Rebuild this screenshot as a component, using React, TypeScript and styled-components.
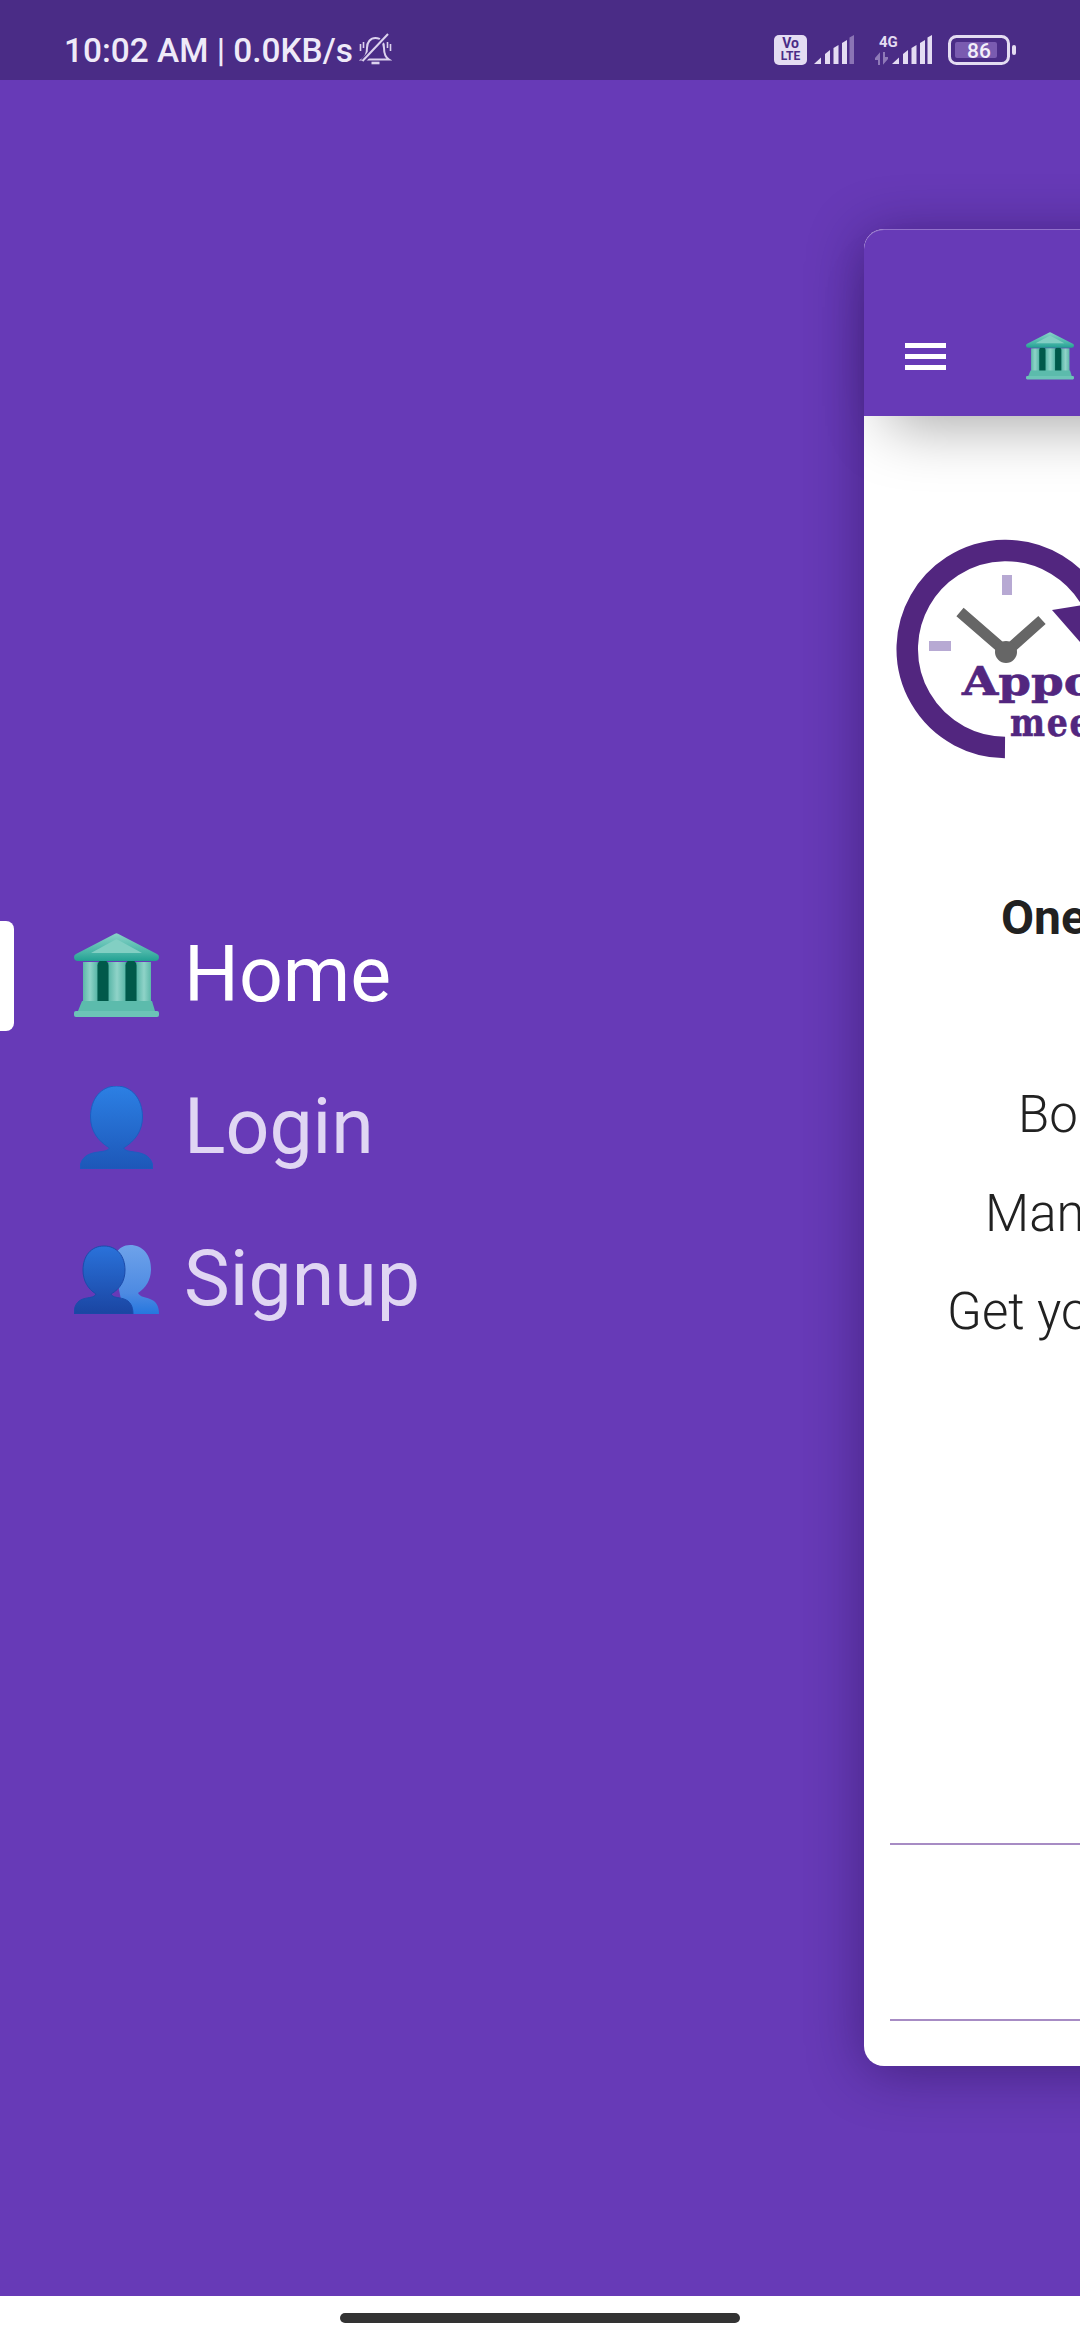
import React from 'react'
import styled, { createGlobalStyle } from 'styled-components'

const GlobalStyle = createGlobalStyle`
  html, body {
    margin: 0;
    padding: 0;
    background: #673ab7;
  }
  body {
    font-family: Roboto, "Liberation Sans", sans-serif;
  }
`

const Page = styled.div`
  position: relative;
  width: 1080px;
  height: 2340px;
  overflow: hidden;
  display: flex;
  flex-direction: column;
  background: #673ab7;
`

const StatusBar = styled.div`
  height: 80px;
  flex: none;
  box-sizing: border-box;
  padding: 19px 64px 0;
  background: #4a2c86;
  display: flex;
  align-items: center;
  justify-content: space-between;
`

const StatusLeft = styled.div`
  display: flex;
  align-items: center;
  gap: 6px;
`

const StatusText = styled.span`
  font-size: 33.4px;
  font-weight: 500;
  line-height: 33px;
  padding-top: 2px;
  color: #efeaf8;
  white-space: nowrap;
`

const StatusRight = styled.div`
  display: flex;
  align-items: center;
`

const VolteBadge = styled.div`
  width: 33px;
  height: 30px;
  margin-right: 7px;
  border-radius: 5px;
  background: #e4dcf2;
  color: #4a2c86;
  font-weight: 700;
  line-height: 13px;
  display: flex;
  flex-direction: column;
  align-items: center;
  justify-content: center;
`

const VolteLine = styled.span<{ $size: number }>`
  font-size: ${(p) => p.$size}px;
`

const NetworkStack = styled.div`
  width: 17px;
  height: 30px;
  margin-left: 21px;
  position: relative;
`

const FourG = styled.span`
  position: absolute;
  left: 4px;
  top: -2px;
  font-size: 15px;
  font-weight: 700;
  color: #e4dcf2;
`

const TransferArrows = styled.svg`
  position: absolute;
  left: 0;
  bottom: 0;
`

const BatteryWrap = styled.span`
  display: flex;
  margin-left: 16px;
`

const Main = styled.div`
  flex: 1;
  box-sizing: border-box;
  padding-top: 819px;
`

const Menu = styled.nav`
  display: flex;
  flex-direction: column;
`

const MenuRow = styled.div<{ $active?: boolean }>`
  position: relative;
  height: 152px;
  display: flex;
  align-items: center;
  color: ${(p) => (p.$active ? '#ffffff' : '#e0d6f3')};
`

const Indicator = styled.span`
  position: absolute;
  left: 0;
  top: 22px;
  width: 14px;
  height: 110px;
  background: #fff;
  border-radius: 0 8px 8px 0;
`

const IconSlot = styled.span`
  width: 85px;
  margin-left: 74px;
  display: flex;
  justify-content: center;
`

const MenuLabel = styled.span`
  margin-left: 25px;
  font-size: 77px;
  font-weight: 400;
  line-height: 90px;
`

const Card = styled.div`
  position: absolute;
  left: 864px;
  top: 229px;
  width: 900px;
  height: 1837px;
  border-radius: 20px;
  background: #fff;
  box-shadow: 0 6px 55px rgba(20, 5, 50, 0.42);
  display: flex;
  flex-direction: column;
`

const CardHeader = styled.header`
  height: 187px;
  flex: none;
  box-sizing: border-box;
  padding: 103px 0 0 41px;
  border-radius: 20px 20px 0 0;
  background: #673ab7;
  box-shadow: inset 0 1px 0 rgba(255, 255, 255, 0.28), 0 34px 60px -24px rgba(0, 0, 0, 0.34);
  display: flex;
  align-items: flex-start;
  gap: 80px;
`

const Hamburger = styled.div`
  width: 41px;
  margin-top: 11px;
  display: flex;
  flex-direction: column;
  gap: 6px;
`

const HamburgerBar = styled.span`
  display: block;
  height: 5px;
  background: #fff;
`

const CardBody = styled.div`
  flex: 1;
  padding: 114px 0 0 26px;
  display: flex;
  flex-direction: column;
`

const Logo = styled.svg`
  display: block;
  flex: none;
  overflow: visible;
`

const Headline = styled.div<{ $indent: number }>`
  margin: 128px 0 0 ${(p) => p.$indent}px;
  font-size: 48px;
  font-weight: 700;
  line-height: 60px;
  color: #212121;
  white-space: nowrap;
`

const Lines = styled.div`
  margin-top: 118px;
  display: flex;
  flex-direction: column;
`

const Line = styled.div<{ $indent: number }>`
  margin-left: ${(p) => p.$indent}px;
  font-size: 51px;
  font-weight: 300;
  line-height: 98.5px;
  color: #212121;
  white-space: nowrap;
`

const Divider = styled.hr<{ $top: number }>`
  margin: ${(p) => p.$top}px 0 0;
  border: 0;
  height: 2px;
  background: #a78cc4;
`

const NavBar = styled.div`
  height: 44px;
  flex: none;
  background: #fff;
  display: flex;
  align-items: flex-start;
  justify-content: center;
  padding-top: 17px;
  box-sizing: border-box;
`

const NavHandle = styled.span`
  width: 400px;
  height: 10px;
  border-radius: 5px;
  background: #333;
`

const Signal = ({ dimLast }: { dimLast?: boolean }) => (
  <svg width="40" height="30" viewBox="0 0 40 30">
    <path d="M0 29 L7 22.5 V29 Z" fill="#e4dcf2" />
    <path d="M11 29 V19 L16 15 V29 Z" fill="#e4dcf2" />
    <path d="M19.5 29 V13 L24.5 10 V29 Z" fill="#e4dcf2" />
    <path d="M28 29 V8 L33 5 V29 Z" fill="#e4dcf2" />
    <path d="M35.5 29 V2.5 L40 0 V29 Z" fill={dimLast ? '#8b74b5' : '#e4dcf2'} />
  </svg>
)

const MutedBell = () => (
  <svg width="33" height="33" viewBox="0 0 33 33" fill="none" stroke="#dcd2ee" strokeWidth="2">
    <path d="M3 26.5 C7 24 8 21 8 15 C8 9 11.5 5 16.5 5 C21.5 5 25 9 25 15 C25 21 26 24 30 26.5 Z" />
    <path d="M12.5 30 H20.5" strokeWidth="2.6" />
    <path d="M1.5 11 V18 M4.5 9 V15 M28.5 9 V15 M31.5 11 V18" strokeWidth="1.6" />
    <path d="M4 28 L29 1" stroke="#4a2c86" strokeWidth="5" />
    <path d="M3.5 28 L29 1" />
  </svg>
)

const Battery = () => (
  <svg width="68" height="30" viewBox="0 0 68 30">
    <rect x="1.5" y="1.5" width="59" height="27" rx="7" fill="none" stroke="#e4dcf2" strokeWidth="3" />
    <rect x="7" y="7" width="42" height="16" rx="2" fill="#7a5bb0" />
    <rect x="64" y="10" width="4" height="10" rx="2" fill="#e4dcf2" />
    <text x="31" y="23" textAnchor="middle" fontSize="21" fontWeight="500" fill="#f3eff9" fontFamily="Roboto, sans-serif">
      86
    </text>
  </svg>
)

const BankIcon = ({ id, size }: { id: string; size: number }) => (
  <svg width={size} height={size} viewBox="0 0 85 85">
    <defs>
      <linearGradient id={`${id}-roof`} x1="0" y1="0" x2="0" y2="1">
        <stop offset="0" stopColor="#8ad3c8" />
        <stop offset="0.7" stopColor="#46b4a6" />
        <stop offset="1" stopColor="#22a092" />
      </linearGradient>
      <linearGradient id={`${id}-col`} x1="0" y1="0" x2="1" y2="0">
        <stop offset="0" stopColor="#5cb8a9" />
        <stop offset="0.5" stopColor="#8fd3c8" />
        <stop offset="1" stopColor="#5cb8a9" />
      </linearGradient>
    </defs>
    <rect x="22" y="29" width="42" height="42" fill="#4cae9f" />
    <rect x="9" y="29" width="14" height="40" fill={`url(#${id}-col)`} />
    <rect x="35" y="29" width="16" height="40" fill={`url(#${id}-col)`} />
    <rect x="63" y="29" width="14" height="40" fill={`url(#${id}-col)`} />
    <rect x="23.5" y="27" width="11" height="47" rx="5.5" fill="#00594a" />
    <rect x="51.5" y="27" width="11" height="47" rx="5.5" fill="#00594a" />
    <path d="M41 0.7 Q42.5 0 44 0.7 L83 21 Q85 22 85 24 Q85 28 81 28 H4 Q0 28 0 24 Q0 22 2 21 Z" fill={`url(#${id}-roof)`} />
    <path d="M42.5 6 L68 20 H17 Z" fill="#82cfc3" />
    <path d="M8 68 H78 L81 78 H4 Z" fill="#5cbbac" />
    <rect x="0" y="78" width="85" height="6" rx="2" fill="#6cc4b7" />
  </svg>
)

const PersonIcon = () => (
  <svg width="73" height="83" viewBox="0 0 73 83">
    <defs>
      <linearGradient id="person-fill" x1="0" y1="0" x2="0" y2="1">
        <stop offset="0" stopColor="#2c80e4" />
        <stop offset="1" stopColor="#1d57b8" />
      </linearGradient>
    </defs>
    <path
      d="M36.5 0 C52 0 62.5 13 62.5 31 C62.5 45 55 55 43.5 62 C46 66 52 65 60 67 C68 69 73 74 73 83 H0 C0 74 5 69 13 67 C21 65 27 66 29.5 62 C18 55 10.5 45 10.5 31 C10.5 13 21 0 36.5 0 Z"
      fill="url(#person-fill)"
      stroke="#1e5cc0"
      strokeWidth="1"
    />
  </svg>
)

const GroupIcon = () => (
  <svg width="85" height="69" viewBox="0 0 85 69">
    <defs>
      <linearGradient id="group-front" x1="0" y1="0" x2="0" y2="1">
        <stop offset="0" stopColor="#2a72da" />
        <stop offset="1" stopColor="#1a45a2" />
      </linearGradient>
      <linearGradient id="group-back" x1="0" y1="0" x2="0" y2="1">
        <stop offset="0" stopColor="#6ea2ea" />
        <stop offset="0.7" stopColor="#4d8ae2" />
        <stop offset="1" stopColor="#2577de" />
      </linearGradient>
    </defs>
    <path
      d="M56 0 C69 0 77 10 77 24 C77 35 72 43 64 48 C66 52 71 52 76 54 C82 56 85 61 85 69 H50 L44 40 L42 8 C45 3 50 0 56 0 Z"
      fill="url(#group-back)"
    />
    <path
      d="M30 1 C43 1 51 11 51 25 C51 36 46 44 37 49 C39 53 44 52 50 54 C56 56 59 61 59 69 H0 C0 61 3 56 9 54 C15 52 20 53 22 49 C14 44 9 36 9 25 C9 11 17 1 30 1 Z"
      fill="url(#group-front)"
      stroke="#1c4bab"
      strokeWidth="1"
    />
  </svg>
)

const ClockLogo = () => (
  <Logo width="300" height="230" viewBox="0 0 300 230">
    <path
      d="M115 217.5 A 98.5 98.5 0 1 1 200 68"
      fill="none"
      stroke="#52267f"
      strokeWidth="21.5"
    />
    <path d="M162 80 L225 70 L210 135 Z" fill="#52267f" />
    <rect x="112" y="45" width="10" height="20" fill="#b7a9d3" />
    <rect x="39" y="111" width="22" height="10" fill="#b7a9d3" />
    <path d="M70 82 L116 122 L152 90" fill="none" stroke="#666" strokeWidth="11" />
    <circle cx="116" cy="122" r="11" fill="#666" />
    <text
      transform="translate(72 165) scale(1.2 1)"
      fontFamily='"DejaVu Serif", serif'
      fontWeight="700"
      fontSize="39"
      fill="#52267f"
      stroke="#52267f"
      strokeWidth="0.6"
    >
      Appointment
    </text>
    <text
      transform="translate(120 206) scale(0.85 1)"
      fontFamily='"DejaVu Serif", serif'
      fontWeight="700"
      fontSize="39"
      letterSpacing="2"
      fill="#52267f"
      stroke="#52267f"
      strokeWidth="0.6"
    >
      meeting
    </text>
  </Logo>
)

export default function App() {
  return (
    <Page>
      <GlobalStyle />
      <StatusBar>
        <StatusLeft>
          <StatusText>10:02 AM | 0.0KB/s</StatusText>
          <MutedBell />
        </StatusLeft>
        <StatusRight>
          <VolteBadge>
            <VolteLine $size={14}>Vo</VolteLine>
            <VolteLine $size={12}>LTE</VolteLine>
          </VolteBadge>
          <Signal dimLast />
          <NetworkStack>
            <FourG>4G</FourG>
            <TransferArrows width="13" height="13" viewBox="0 0 13 13">
              <path d="M4 13 V3 L0.5 7 H3 M9 0 V10 L12.5 6 H10" fill="none" stroke="#8f7ab8" strokeWidth="2" />
            </TransferArrows>
          </NetworkStack>
          <Signal />
          <BatteryWrap>
            <Battery />
          </BatteryWrap>
        </StatusRight>
      </StatusBar>

      <Main>
        <Menu>
          <MenuRow $active>
            <Indicator />
            <IconSlot>
              <BankIcon id="menu-bank" size={85} />
            </IconSlot>
            <MenuLabel>Home</MenuLabel>
          </MenuRow>
          <MenuRow>
            <IconSlot>
              <PersonIcon />
            </IconSlot>
            <MenuLabel>Login</MenuLabel>
          </MenuRow>
          <MenuRow>
            <IconSlot>
              <GroupIcon />
            </IconSlot>
            <MenuLabel>Signup</MenuLabel>
          </MenuRow>
        </Menu>
      </Main>

      <NavBar>
        <NavHandle />
      </NavBar>

      <Card>
        <CardHeader>
          <Hamburger>
            <HamburgerBar />
            <HamburgerBar />
            <HamburgerBar />
          </Hamburger>
          <BankIcon id="header-bank" size={48} />
        </CardHeader>
        <CardBody>
          <ClockLogo />
          <Headline $indent={111}>One stop</Headline>
          <Lines>
            <Line $indent={128}>Book</Line>
            <Line $indent={95}>Manage</Line>
            <Line $indent={57}>Get your</Line>
          </Lines>
          <Divider $top={481} />
          <Divider $top={174} />
        </CardBody>
      </Card>
    </Page>
  )
}
